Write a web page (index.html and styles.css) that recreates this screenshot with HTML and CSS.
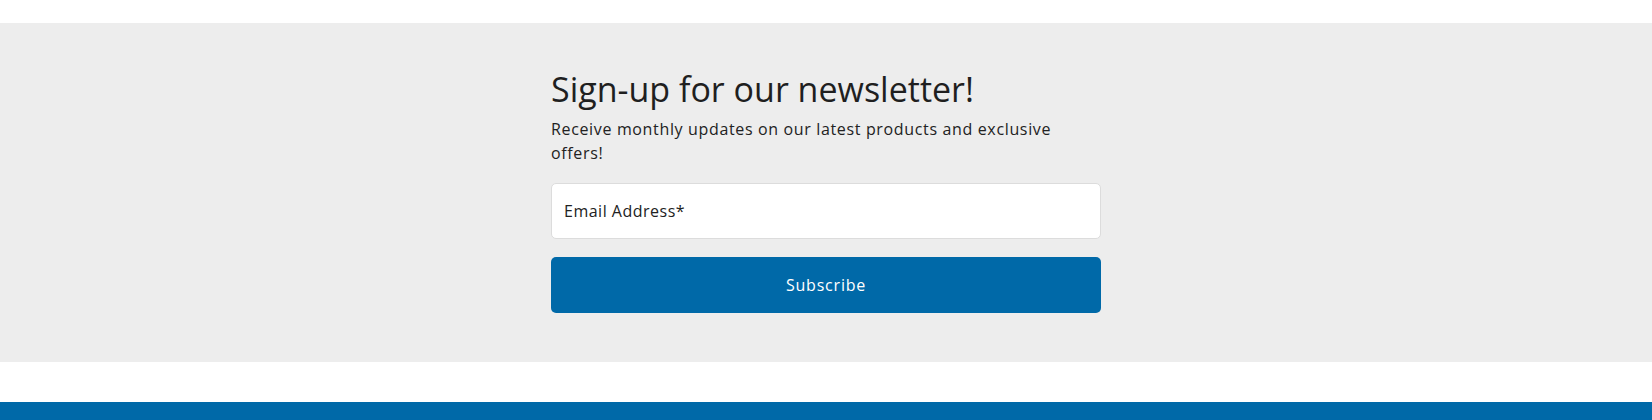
FILE: index.html
```html
<!DOCTYPE html>
<html lang="en">
<head>
<meta charset="utf-8">
<title>Newsletter</title>
<link rel="stylesheet" href="styles.css">
</head>
<body>
<div class="top-space"></div>
<section class="newsletter">
  <div class="newsletter-inner">
    <h2 class="newsletter-title">Sign-up for our newsletter!</h2>
    <p class="newsletter-text">Receive monthly updates on our latest products and exclusive offers!</p>
    <form class="newsletter-form">
      <label class="email-field">
        <span class="email-label">Email Address*</span>
      </label>
      <button type="button" class="subscribe-btn">Subscribe</button>
    </form>
  </div>
</section>
<div class="gap-space"></div>
<footer class="footer-bar"></footer>
</body>
</html>
```
FILE: styles.css
```css
* { box-sizing: border-box; }
html, body { margin: 0; padding: 0; background: #fff; }
body {
  font-family: "Open Sans", "Noto Sans", sans-serif;
  color: #222;
}
.top-space { height: 23px; }
.newsletter {
  background: #ededed;
  height: 339px;
  padding-top: 44px;
}
.newsletter-inner {
  width: 550px;
  margin: 0 auto;
}
.newsletter-title {
  margin: 0;
  font-size: 34px;
  font-weight: 400;
  line-height: 44px;
  color: #1f1f1f;
}
.newsletter-text {
  margin: 6px 0 0;
  font-size: 16px;
  letter-spacing: 0.65px;
  line-height: 24px;
  color: #222;
  width: 520px;
}
.newsletter-form {
  margin-top: 18px;
  display: flex;
  flex-direction: column;
  gap: 18px;
}
.email-field {
  display: flex;
  align-items: center;
  height: 56px;
  background: #fff;
  border: 1px solid #dcdcdc;
  border-radius: 5px;
  padding: 0 12px;
}
.email-label {
  font-size: 16px;
  letter-spacing: 0.5px;
  color: #222;
}
.subscribe-btn {
  height: 56px;
  background: #0069a8;
  color: #fff;
  border: none;
  border-radius: 5px;
  font-family: inherit;
  font-size: 16px;
  letter-spacing: 0.8px;
  cursor: pointer;
}
.gap-space { height: 40px; }
.footer-bar { height: 18px; background: #0069a8; }
```
